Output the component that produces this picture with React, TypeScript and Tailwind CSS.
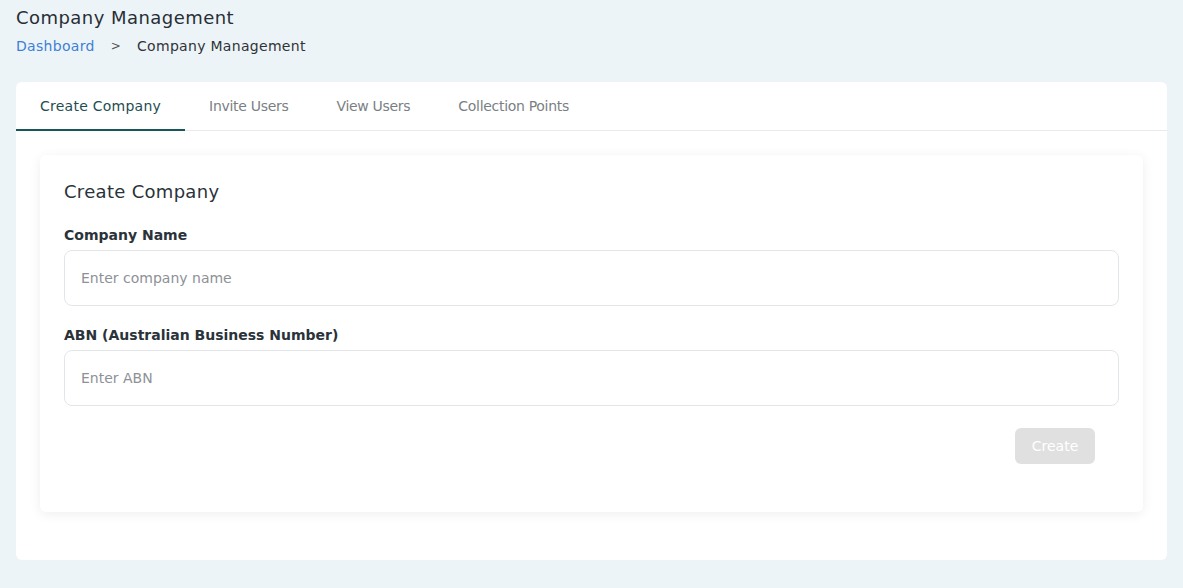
import React, { useState } from 'react'

const tabs = ['Create Company', 'Invite Users', 'View Users', 'Collection Points']

function App() {
  const [active, setActive] = useState(0)
  const [name, setName] = useState('')
  const [abn, setAbn] = useState('')

  return (
    <div
      className="min-h-[588px] bg-[#edf4f8] px-4 pt-[7px] pb-7 text-[#272e36]"
      style={{ fontFamily: '"DejaVu Sans", sans-serif' }}
    >
      <h1 className="text-[18px] font-medium leading-[22px] tracking-[0.45px]">Company Management</h1>
      <div className="mt-[8px] flex items-center text-[14px] leading-[18px] tracking-[0.3px]">
        <span className="text-[#3d7fd6]">Dashboard</span>
        <span className="mx-[16px] text-[12px] text-[#555]">&gt;</span>
        <span className="text-[#2f3338]">Company Management</span>
      </div>

      <div className="mt-[27px] rounded-md bg-white pb-12">
        <div className="flex border-b border-[#e8eaec]">
          {tabs.map((t, i) => (
            <button
              key={t}
              onClick={() => setActive(i)}
              className={
                i === active
                  ? 'relative h-12 px-6 text-[14px] tracking-[0.25px] text-[#1e4d52] after:absolute after:bottom-[-1px] after:left-0 after:h-[2px] after:w-full after:bg-[#17575b]'
                  : 'h-12 px-6 text-[14px] tracking-[-0.3px] text-[#7a7f84]'
              }
            >
              {t}
            </button>
          ))}
        </div>

        <div className="mx-6 mt-6 rounded-md bg-white px-6 pt-[25px] pb-12 shadow-[0_2px_12px_rgba(0,0,0,0.07)]">
          <h2 className="text-[18px] font-medium leading-[24px] tracking-[0.3px] text-[#2a323a]">Create Company</h2>

          <label htmlFor="companyName" className="mt-[22px] block text-[14px] font-semibold leading-[18px] text-[#2a323a]">
            Company Name
          </label>
          <input
            id="companyName"
            value={name}
            onChange={(e) => setName(e.target.value)}
            placeholder="Enter company name"
            className="mt-[6px] block h-14 w-full rounded-lg border border-[#e3e6e9] px-4 text-[14px] placeholder:text-[#8d9196] focus:outline-none"
          />

          <label htmlFor="abn" className="mt-[20px] block text-[14px] font-semibold leading-[18px] text-[#2a323a]">
            ABN (Australian Business Number)
          </label>
          <input
            id="abn"
            value={abn}
            onChange={(e) => setAbn(e.target.value)}
            placeholder="Enter ABN"
            className="mt-[6px] block h-14 w-full rounded-lg border border-[#e3e6e9] px-4 text-[14px] placeholder:text-[#8d9196] focus:outline-none"
          />

          <div className="mt-[22px] flex justify-end pr-6">
            <button
              disabled={!name || !abn}
              className="h-9 w-20 rounded-md bg-[#e0e0e0] text-[14px] font-medium text-white"
            >
              Create
            </button>
          </div>
        </div>
      </div>
    </div>
  )
}

export default App
